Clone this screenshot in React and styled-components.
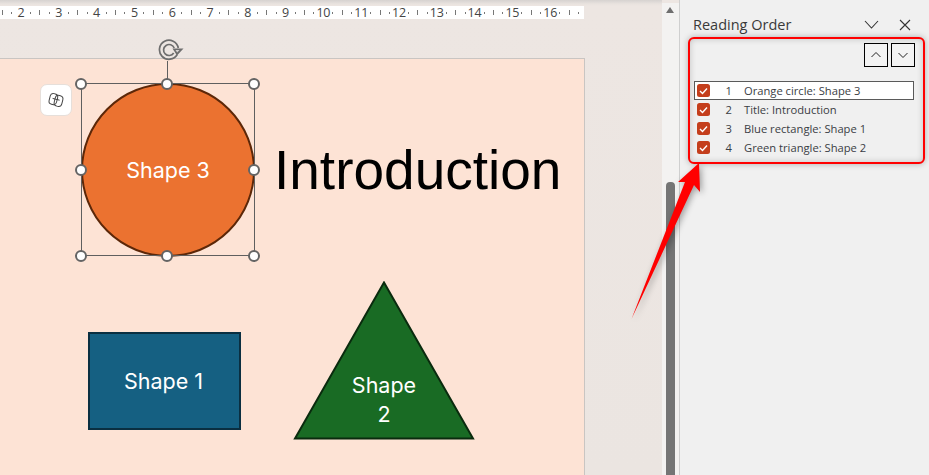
import React from "react";
import styled, { createGlobalStyle } from "styled-components";

const Global = createGlobalStyle`
  html, body { margin: 0; padding: 0; width: 929px; height: 475px; overflow: hidden; background: #ede6e2; }
  * { box-sizing: border-box; }
`;
const Window = styled.div`
  position: relative; display: flex; width: 929px; height: 475px; overflow: hidden;
  font-family: "Open Sans", "Noto Sans", sans-serif;
`;
const Main = styled.div`
  width: 662px; height: 475px; display: flex; flex-direction: column; flex: none;
  padding-top: 6px; background: linear-gradient(#d6d2d0 0, #e9e3df 4px, #ede6e2 6px, #ebe5e1 100%);
`;
const Ruler = styled.div`
  width: 584px; height: 13px; flex: none; background: #fff; display: flex; padding-left: 0;
  font-size: 12.5px; color: #444; line-height: 13px;
`;
const RulerCell = styled.div`
  flex: none; width: 37.8px; margin-left: ${p => (p.$first ? "-2.6px" : "0")};
  display: grid; grid-template-columns: 9.45px 5.15px 18px 5.2px;
  align-items: center; justify-items: center; height: 13px;
`;
const RulerTail = styled.div`
  flex: none; width: 18.9px; display: grid; grid-template-columns: 9.45px 9.45px;
  align-items: center; justify-items: center; height: 13px;
`;
const Tick = styled.i`width: 1px; height: 5px; background: #777;`;
const Dot = styled.i`width: 1px; height: 2px; background: #777; justify-self: ${p => p.$side};`;
const Num = styled.span`font-style: normal; letter-spacing: -0.2px;`;
const Canvas = styled.div`position: relative; flex: 1; margin-top: 39px;`;
const Slide = styled.div`
  position: absolute; left: 0; top: 0; width: 585px; height: 420px;
  background: #fde3d5; border-top: 1px solid #c9c5c2; border-right: 1px solid #c9c5c2;
`;
const SlideText = styled.div`
  font-family: Inter, "Liberation Sans", sans-serif; color: #fff; text-align: center; font-size: 21.5px;
`;
const Circle = styled(SlideText)`
  position: absolute; left: 81px; top: 24px; width: 174px; height: 174px; border-radius: 50%;
  background: #eb7230; border: 2px solid #5c2708; display: flex; align-items: center; justify-content: center;
`;
const Rect = styled(SlideText)`
  position: absolute; left: 88px; top: 273px; width: 153px; height: 98px; background: #156082;
  border: 2px solid #0a2f41; display: flex; align-items: center; justify-content: center; padding-right: 2px;
`;
const Triangle = styled(SlideText)`
  position: absolute; left: 293px; top: 222px; width: 182px; height: 159px; line-height: 29px;
`;
const TriangleLabel = styled.div`position: absolute; left: 0; right: 0; top: 90px;`;
const Title = styled.div`
  position: absolute; left: 274px; top: 77px; font-family: "Liberation Sans", Arial, sans-serif;
  font-size: 55px; line-height: 68px; color: #000; white-space: nowrap;
`;
const Frame = styled.div`
  position: absolute; left: 81px; top: 24px; width: 174px; height: 173px; border: 1px solid #5f5f5f;
`;
const Stem = styled.div`position: absolute; left: 167px; top: 2px; width: 1px; height: 23px; background: #5f5f5f;`;
const Handle = styled.div`
  position: absolute; left: ${p => p.$x - 6}px; top: ${p => p.$y - 6}px; width: 12px; height: 12px;
  border-radius: 50%; background: #fff; border: 2px solid #646464;
`;
const RotateGlyph = styled.svg`position: absolute; left: 157px; top: -20px; width: 28px; height: 24px;`;
const CopilotBtn = styled.div`
  position: absolute; left: 40px; top: 25px; width: 32px; height: 32px; border-radius: 7px; background: #fff;
  border: 1px solid #e6dfda; display: flex; align-items: center; justify-content: center;
`;
const ScrollCol = styled.div`
  position: relative; width: 17px; flex: none; background: #f3f2f1; margin-top: 3px;
`;
const ScrollUp = styled.div`
  position: absolute; left: 4px; top: 4px; width: 0; height: 0;
  border-left: 4.5px solid transparent; border-right: 4.5px solid transparent; border-bottom: 6px solid #6e6e6e;
`;
const Thumb = styled.div`
  position: absolute; left: 4px; top: 179px; bottom: -4px; width: 9px; background: #757575; border-radius: 4px 4px 0 0;
`;
const Pane = styled.div`
  width: 250px; flex: none; border-left: 1px solid #cfcfcf; background: #f0f0f0; padding: 3px 0 0 0; color: #2c2c2c;
  display: flex; flex-direction: column;
`;
const PaneHead = styled.div`
  height: 34px; display: flex; align-items: center; padding: 9px 17px 0 13px;
  font-size: 14.5px; font-weight: 500; color: #3a3a3a;
`;
const HeadTitle = styled.div`flex: 1;`;
const HeadIcons = styled.div`display: flex; gap: 19px; align-items: center;`;
const RedBox = styled.div`
  width: 237px; height: 127px; margin-left: 8px; border: 2px solid #f00; border-radius: 6px; background: #f0f0f0;
  box-shadow: 0 0 6px rgba(0,0,0,.28), inset 0 0 6px rgba(0,0,0,.2); padding: 4px 8px 0 4px;
  display: flex; flex-direction: column;
`;
const MoveRow = styled.div`display: flex; justify-content: flex-end; gap: 3px;`;
const MoveBtn = styled.div`
  width: 24px; height: 24px; border: 1px solid #000; background: #f3f3f3;
  display: flex; align-items: center; justify-content: center;
`;
const List = styled.div`margin: 14px 1px 0 0; display: flex; flex-direction: column;`;
const Row = styled.div`
  height: 19px; display: flex; align-items: center; font-size: 11.2px; color: #3a3d44; padding-left: 2px;
  border: 1px solid ${p => (p.$sel ? "#5a5a5a" : "transparent")}; background: ${p => (p.$sel ? "#fff" : "transparent")};
`;
const Check = styled.div`
  width: 13px; height: 13px; border-radius: 2.5px; background: #c43e1c; flex: none;
  display: flex; align-items: center; justify-content: center;
`;
const Order = styled.div`width: 32px; text-align: right; flex: none; margin-right: 12px; margin-left: -10px;`;
const Label = styled.div`white-space: nowrap;`;
const Arrow = styled.svg`
  position: absolute; left: 620px; top: 150px; width: 100px; height: 180px; overflow: visible;
  filter: drop-shadow(2px 2px 3px rgba(0,0,0,.35));
`;

const marks = [2,3,4,5,6,7,8,9,10,11,12,13,14,15,16];
const rows = ["Orange circle: Shape 3","Title: Introduction","Blue rectangle: Shape 1","Green triangle: Shape 2"];
const handles = [[81,24.5],[167,24.5],[254,24.5],[81,111],[254,111],[81,197],[167,197],[254,197]];

export default function App() {
  return (
    <Window>
      <Global />
      <Main>
        <Ruler>
          {marks.map((n, i) => (
            <RulerCell key={n} $first={i === 0}>
              <Tick /><Dot $side="end" /><Num>{n}</Num><Dot $side="start" />
            </RulerCell>
          ))}
          <RulerTail><Tick /><Dot $side="center" /></RulerTail>
        </Ruler>
        <Canvas>
          <Slide>
            <Circle>Shape 3</Circle>
            <Title>Introduction</Title>
            <Rect>Shape 1</Rect>
            <Triangle>
              <svg width="182" height="159" viewBox="0 0 182 159">
                <path d="M91 1.5 L180 157.5 L2 157.5 Z" fill="#196b24" stroke="#0a2b0e" strokeWidth="2" />
              </svg>
              <TriangleLabel>Shape<br />2</TriangleLabel>
            </Triangle>
            <Frame />
            <Stem />
            {handles.map(([x, y]) => <Handle key={`${x}-${y}`} $x={x} $y={y} />)}
            <RotateGlyph viewBox="0 0 28 24">
              <path d="M20.2 15.5 A9.5 9.5 0 1 1 21.3 9" fill="none" stroke="#6e6e6e" strokeWidth="1.7" />
              <path d="M16.7 14 A5.5 5.5 0 1 1 17.2 9" fill="none" stroke="#6e6e6e" strokeWidth="1.7" />
              <path d="M15.5 9.5 L26.5 9.5 L20 16.5 Z" fill="#6e6e6e" />
              <path d="M18.5 11 L22.5 11 L20.2 13.5 Z" fill="#d8d4d2" />
            </RotateGlyph>
            <CopilotBtn>
              <svg width="18" height="18" viewBox="0 0 18 18" fill="none" stroke="#444" strokeWidth="1">
                <rect x="2.6" y="2.6" width="7.6" height="11" rx="3.2" transform="rotate(14 6.4 8)" />
                <rect x="7.6" y="4.4" width="7.8" height="11" rx="3.4" transform="rotate(14 11.5 10)" />
                <path d="M5.6 7.4 L12.6 9.2" />
              </svg>
            </CopilotBtn>
          </Slide>
        </Canvas>
      </Main>
      <ScrollCol>
        <ScrollUp />
        <Thumb />
      </ScrollCol>
      <Pane>
        <PaneHead>
          <HeadTitle>Reading Order</HeadTitle>
          <HeadIcons>
            <svg width="15" height="15" viewBox="0 0 15 15" fill="none" stroke="#333" strokeWidth="1.1"><path d="M1 4 L7.5 11 L14 4" /></svg>
            <svg width="14" height="14" viewBox="0 0 14 14" fill="none" stroke="#333" strokeWidth="1.1"><path d="M2 2 L12 12 M12 2 L2 12" /></svg>
          </HeadIcons>
        </PaneHead>
        <RedBox>
          <MoveRow>
            <MoveBtn><svg width="12" height="8" viewBox="0 0 12 8" fill="none" stroke="#222" strokeWidth="1"><path d="M1.5 6 L6 1.5 L10.5 6" /></svg></MoveBtn>
            <MoveBtn><svg width="12" height="8" viewBox="0 0 12 8" fill="none" stroke="#222" strokeWidth="1"><path d="M1.5 2 L6 6.5 L10.5 2" /></svg></MoveBtn>
          </MoveRow>
          <List>
            {rows.map((t, i) => (
              <Row key={t} $sel={i === 0}>
                <Check>
                  <svg width="9" height="8" viewBox="0 0 9 8" fill="none" stroke="#fff" strokeWidth="1.4"><path d="M1 4 L3.5 6.5 L8 1.5" /></svg>
                </Check>
                <Order>{i + 1}</Order>
                <Label>{t}</Label>
              </Row>
            ))}
          </List>
        </RedBox>
      </Pane>
      <Arrow viewBox="0 0 100 180">
        <path d="M79 13 L80 42 L74 35 L11.5 169 L65 32 L58 32 Z" fill="#f00" />
      </Arrow>
    </Window>
  );
}
